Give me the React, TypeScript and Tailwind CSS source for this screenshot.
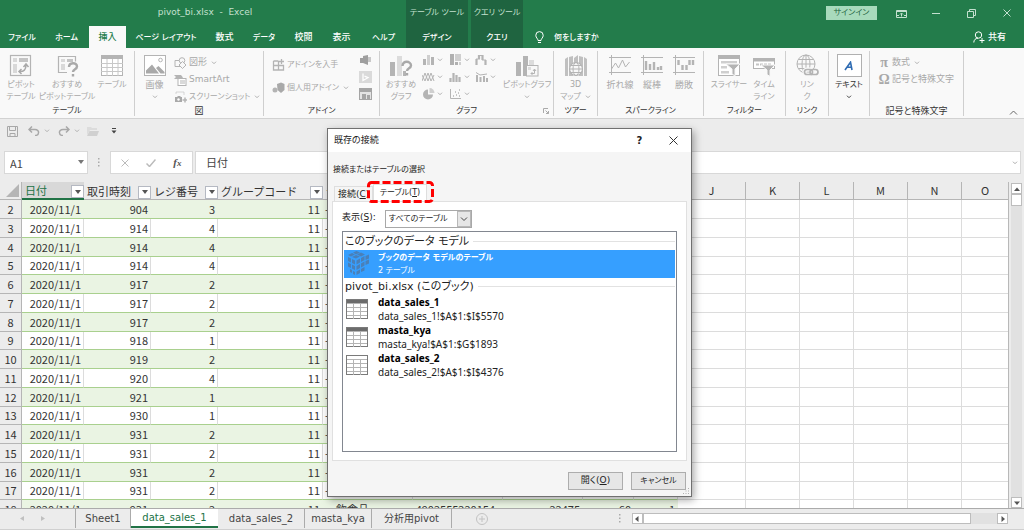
import type { ReactNode } from 'react';
import clsx from 'clsx';

type IconProps = { className?: string; children: ReactNode; box?: string };

function Icon({ className = 'h-[23px] w-[24px]', box = '0 0 24 23', children }: IconProps) {
  return (
    <svg className={clsx('shrink-0', className)} viewBox={box} fill="none" stroke="#b4b4b4">
      {children}
    </svg>
  );
}

function Small({ children }: { children: ReactNode }) {
  return (
    <Icon className="h-[12px] w-[13px]" box="0 0 13 12">
      {children}
    </Icon>
  );
}

function Chevron({ className = 'text-[#b0b0b0]' }: { className?: string }) {
  return (
    <svg className={clsx('h-[4px] w-[6px] shrink-0', className)} viewBox="0 0 6 4" fill="none" stroke="currentColor">
      <path d="M1 .7 3 2.7 5 .7" />
    </svg>
  );
}

/* ---------- ribbon drawings ---------- */

const pivotIcon = (
  <Icon>
    <rect x="1.5" y="1.5" width="20" height="20" strokeWidth="1.2" />
    <path d="M4 4h4v4H4zM4 10h4v9H4z" fill="#d9d9d9" stroke="none" />
    <path d="M10 4h9v4h-9z" fill="#c4c4c4" stroke="none" />
    <path d="M10 17.500c5 .5 7-2 7-6.500M14.500 13l2.500-3 2.500 3M12.500 15 10 17.500l2.500 2.500" stroke="#a9a9a9" strokeWidth="1.500" />
  </Icon>
);

const pivotHelpIcon = (
  <Icon>
    <path d="M12 18.500H3.500v-16h17v5" strokeWidth="1.200" />
    <path d="M6 5h4v3H6zM6 10h4v6H6z" fill="#d9d9d9" stroke="none" />
    <path d="M12 5h6v3h-6z" fill="#c4c4c4" stroke="none" />
    <path d="M14 13c0-5 8-5 8-.5 0 3-4 2.500-4 5.500M18 20v2.500" stroke="#a9a9a9" strokeWidth="2.400" />
  </Icon>
);

const tableIcon = (
  <Icon>
    <rect x="1.500" y="1.500" width="21" height="20" fill="#fff" />
    <path d="M1 1h22v4H1z" fill="#b4b4b4" stroke="none" />
    <path d="M1 9.500h22M1 13.500h22M1 17.500h22M7 5v17M12.500 5v17M18 5v17" stroke="#c8c8c8" />
  </Icon>
);

const pictureIcon = (
  <Icon>
    <rect x="1.500" y="1.500" width="21" height="20" fill="#fff" />
    <path d="M3 19.500v-3l6-6 7 9zM13 14l2.500-2 6 6v1.500h-4z" fill="#a9a9a9" stroke="none" />
    <circle cx="17.500" cy="6" r="1.800" />
  </Icon>
);

const chartHelpIcon = (
  <Icon>
    <path d="M1 8h5v14H1z" fill="#b4b4b4" stroke="none" />
    <path d="M8 2h5v20H8z" fill="#dcdcdc" stroke="none" />
    <path d="M14 17h3v5h-3z" fill="#b4b4b4" stroke="none" />
    <path d="M13.500 12c0-6 8.500-5 8.500-.5 0 3-4 2.500-4 5.500M18 19v2.500" stroke="#a9a9a9" strokeWidth="2.400" />
  </Icon>
);

const pivotChartIcon = (
  <Icon>
    <path d="M1 8h5v14H1z" fill="#b4b4b4" stroke="none" />
    <path d="M8 2h5v20H8z" fill="#b4b4b4" stroke="none" />
    <path d="M14 6h5v6h-5z" fill="#dcdcdc" stroke="none" />
    <rect x="11.500" y="11.500" width="11.500" height="10.500" fill="#f8f8f8" />
    <path d="M13 13h3v3h-3z" fill="#dcdcdc" stroke="none" />
    <path d="M16 19.500h3.500v-4M18 17l1.500-2 1.500 2M17.500 18 16 19.500l1.500 1.500" />
  </Icon>
);

const mapIcon = (
  <Icon>
    <path d="M1 5l3-2v19H1zM5 3l4-1v20H5zM10 4l4-3v8h-4zM15 2l4 1v19h-4zM20 3l3 2v17h-3z" fill="#c0c0c0" stroke="none" />
    <circle cx="12" cy="15" r="6.500" fill="#f8f8f8" strokeWidth="1.200" />
    <ellipse cx="12" cy="15" rx="3" ry="6.500" />
    <path d="M5.500 15h13M7 11.500h10M7 18.500h10" />
  </Icon>
);

const lineSpark = (
  <Icon>
    <path d="M1 3.500h22M1 18.500h22M3.500 1v20M3.500 15l4-6 3 5 4-8 3 7 4-5" />
  </Icon>
);

const columnSpark = (
  <Icon>
    <path d="M1 3.500h22M1 18.500h22M3.500 1v20" />
    <path d="M6 7v9M10 10v6M14 8v8M18 13v3M21 12v4" strokeWidth="2.400" />
  </Icon>
);

const winLossSpark = (
  <Icon>
    <path d="M1 3.500h22M1 18.500h22M3.500 1v20" />
    <path d="M6.500 6v5M10.500 11v5M14.500 11v5M17.500 6v5M21 6v5" strokeWidth="2.400" />
  </Icon>
);

const slicerIcon = (
  <Icon>
    <rect x="1.500" y="1.500" width="21" height="20" fill="#fff" />
    <path d="M1 1h22v4H1z" fill="#b4b4b4" stroke="none" />
    <path d="M4 7h16v2.500H4zM4 12h6v2.500H4zM4 17h8v2.500H4z" fill="#cfcfcf" stroke="none" />
    <path d="M9 10h14l-5 5v7l-3-2v-5z" fill="#b4b4b4" stroke="#f8f8f8" />
  </Icon>
);

const timelineIcon = (
  <Icon>
    <rect x="1.500" y="4.500" width="21" height="10" fill="#fff" />
    <path d="M1 4h22v3.500H1z" fill="#b4b4b4" stroke="none" />
    <path d="M4 10.500h16" stroke="#c4c4c4" strokeWidth="2" strokeDasharray="3 1" />
    <path d="M9 11h14l-5 5v6.500l-3-2V16z" fill="#b4b4b4" stroke="#f8f8f8" />
  </Icon>
);

const linkIcon = (
  <Icon>
    <circle cx="11" cy="10" r="9" />
    <ellipse cx="11" cy="10" rx="4" ry="9" />
    <path d="M2 10h18M3.500 5.500h15M3.500 14.500h11M11 1v18" />
    <rect x="9.500" y="15.500" width="8" height="5" rx="2.500" stroke="#f8f8f8" strokeWidth="4" />
    <rect x="9.500" y="15.500" width="8" height="5" rx="2.500" strokeWidth="1.700" />
    <rect x="15" y="15.500" width="8" height="5" rx="2.500" strokeWidth="1.700" />
  </Icon>
);

const textIcon = (
  <span className="flex h-[23px] w-[25px] shrink-0 items-center justify-center border border-[#b0b0b0] bg-white">
    <svg className="h-[10px] w-[10px]" viewBox="0 0 10 10" fill="none" stroke="#2f6cb3" strokeWidth="1.600">
      <path d="M1 9 6.500 1.200 8 9M3 6.300h4.500" />
    </svg>
  </span>
);

const shapesIcon = (
  <Small>
    <path d="M1 3.500h7v6H1z" />
    <circle cx="8" cy="3.500" r="2.800" fill="#f8f8f8" />
    <path d="M8.500 4.500 12 8l-3.500 3.500L5 8z" fill="#f8f8f8" />
  </Small>
);

const smartArtIcon = (
  <Small>
    <path d="M0 1h7l2 2.500L7 5H0l2-2z" fill="#b4b4b4" stroke="none" />
    <rect x="4" y="4.500" width="8" height="7" fill="#fff" />
    <path d="M6 7h5M6 9h5" />
  </Small>
);

const screenshotIcon = (
  <Small>
    <path d="M1 6h2l1-1h2l1 1h1v5H1z" fill="#a9a9a9" stroke="none" />
    <circle cx="4.500" cy="8.500" r="1.200" fill="#fff" stroke="none" />
    <path d="M11 6.500v5M8.500 9h5" strokeWidth="1.500" />
    <path d="M2 2.500V1h8v3" strokeDasharray="1 1" />
  </Small>
);

const getAddinIcon = (
  <Small>
    <path d="M1.500 2v9h10V6.500h-10M6.500 2v9M1.500 2h5M9.500 0v5M7 2.500h5" strokeWidth="1.300" />
  </Small>
);

const myAddinIcon = (
  <Small>
    <path d="M5 2 9 .5 12.500 2v6L9 11 5.500 8z" fill="#a9a9a9" stroke="none" />
    <circle cx="3" cy="8" r="2.500" fill="#b4b4b4" stroke="none" />
  </Small>
);

const addinShortcuts = [
  <Small key="visio">
    <path d="M1 4h5v5H1zM4 2l5-1v10L4 9z" fill="#9f9f9f" stroke="none" />
    <path d="M9 3h3v5H9z" fill="#c9c9c9" stroke="none" />
  </Small>,
  <Small key="bing">
    <path d="M0 0h13v12H0z" fill="#dadada" stroke="none" />
    <path d="M4 2.500v7l5-2.800-3.500-1.500" stroke="#fff" strokeWidth="1.300" />
  </Small>,
  <Small key="people">
    <rect x=".5" y=".5" width="12" height="11" fill="#e3e3e3" stroke="#a5a5a5" />
    <path d="M1 1h11v3H1zM3 6h4v5H3zM8 7h3v4H8z" fill="#a5a5a5" stroke="none" />
  </Small>,
];

const chartIcons: ReactNode[] = [
  <Small key="column">
    <path d="M1 5h3v6H1zM9 3h3v8H9z" fill="#b4b4b4" stroke="none" />
    <path d="M5 1h3v10H5z" fill="#cfcfcf" stroke="none" />
  </Small>,
  <Small key="tree">
    <path d="M1 0h4v11H1zM6 8h3v3H6z" fill="#b0b0b0" stroke="none" />
    <path d="M6 0h6v7H6zM10 8h2v3h-2z" fill="#cfcfcf" stroke="none" />
  </Small>,
  <Small key="waterfall">
    <path d="M1.500 5v6M4 1v4M7.500 1v5M10.500 6v5" strokeWidth="2.200" />
    <path d="M1 5h4M4 1.500h4M7 6h4" />
  </Small>,
  <Small key="line">
    <path d="M0 10 3 2l3 8 3-8 3 8M0 4l3 6 3-8 3 8 3-6" />
  </Small>,
  <Small key="histogram">
    <path d="M1.500 7v4M4.500 2v9M7.500 4v7M10.500 6v5" strokeWidth="2.200" />
  </Small>,
  <Small key="combo">
    <path d="M2 4v7M5.500 6v5M9 5v6M12 7v4" strokeWidth="2" />
    <path d="M1 1.500 5 4l7-1" />
  </Small>,
  <Small key="pie">
    <path d="M6 1.500a5 5 0 1 0 5 5H6z" fill="#b4b4b4" stroke="none" />
    <path d="M7.500 0a5 5 0 0 1 5 5h-5z" fill="#cfcfcf" stroke="none" />
  </Small>,
  <Small key="scatter">
    <path d="M1.500 1v9.500H12" />
    <path d="M4 8h1M6 4h1M7 7h1M9 5h1M10 2h1M10 8h1" strokeWidth="1.500" />
  </Small>,
];

/* ---------- ribbon ---------- */

type GroupProps = { label: string; width: string; children: ReactNode; corner?: boolean; wide?: boolean };

function Group({ label, width, children, corner, wide }: GroupProps) {
  return (
    <section className={clsx('flex h-[65px] shrink-0 flex-col border-r border-[#cfcfcf]', width)}>
      <div className="flex h-[53px] shrink-0 pt-[3px]">{children}</div>
      <div className={clsx('relative text-center leading-[14px] text-[#333]', wide ? 'text-[9px]' : 'text-[8px]')}>
        {label}
        {corner && (
          <svg className="absolute right-1 bottom-1 h-[6px] w-[6px]" viewBox="0 0 6 6" fill="none" stroke="#aaa">
            <path d="M.5 5V.5H5M2.500 2.500l3 3M5.500 3v2.500H3" />
          </svg>
        )}
      </div>
    </section>
  );
}

type BigProps = {
  icon: ReactNode;
  lines: string[];
  width: string;
  arrow?: boolean;
  inlineArrow?: boolean;
  dark?: boolean;
  wide?: boolean;
};

function Big({ icon, lines, width, arrow, inlineArrow, dark, wide }: BigProps) {
  return (
    <button
      className={clsx(
        'flex shrink-0 flex-col items-center leading-[12px] whitespace-nowrap',
        width,
        wide ? 'text-[9px]' : 'text-[8px]',
        dark ? 'text-[#333]' : 'text-[#a8a8a8]',
      )}
    >
      {icon}
      <span className="h-[2px]" />
      {lines.map((line, i) => (
        <span key={line} className="flex items-center gap-1">
          {line}
          {inlineArrow && i === lines.length - 1 && <Chevron />}
        </span>
      ))}
      {arrow && <Chevron className={clsx('mt-1', dark ? 'text-[#444]' : 'text-[#b0b0b0]')} />}
    </button>
  );
}

function Row({ icon, label, arrow, wide }: { icon: ReactNode; label: string; arrow?: boolean; wide?: boolean }) {
  return (
    <button
      className={clsx(
        'flex h-[17px] items-center gap-[2px] whitespace-nowrap text-[#a8a8a8]',
        wide ? 'text-[9px]' : 'text-[8px]',
      )}
    >
      {icon}
      {label}
      {arrow && (
        <span className="pl-[2px]">
          <Chevron />
        </span>
      )}
    </button>
  );
}

function Ribbon() {
  return (
    <div className="relative flex h-[71px] overflow-hidden border-b border-[#d2d2d2] bg-[#f9f9f9] pt-[3px]">
      <Group label="テーブル" width="w-[135px]">
        <Big icon={pivotIcon} lines={['ピボット', 'テーブル']} width="w-[42px]" />
        <Big icon={pivotHelpIcon} lines={['おすすめ', 'ピボットテーブル']} width="w-[50px]" />
        <Big icon={tableIcon} lines={['テーブル']} width="w-[40px]" />
      </Group>
      <Group label="図" width="w-[129px]" wide>
        <Big icon={pictureIcon} lines={['画像']} width="w-[39px]" arrow wide />
        <div>
          <Row icon={shapesIcon} label="図形" arrow wide />
          <Row icon={smartArtIcon} label="SmartArt" wide />
          <Row icon={screenshotIcon} label="スクリーンショット" arrow />
        </div>
      </Group>
      <Group label="アドイン" width="w-[116px]">
        <div className="flex w-[95px] flex-col gap-[6px] pt-[2px] pl-2">
          <Row icon={getAddinIcon} label="アドインを入手" />
          <Row icon={myAddinIcon} label="個人用アドイン" arrow />
        </div>
        <div className="flex flex-col gap-[5px]">{addinShortcuts}</div>
      </Group>
      <Group label="グラフ" width="w-[174px]" corner>
        <Big icon={chartHelpIcon} lines={['おすすめ', 'グラフ']} width="w-[42px]" />
        <div className="grid h-[50px] w-[80px] grid-cols-3 content-start gap-y-[5px]">
          {chartIcons.map((icon, i) => (
            <button key={i} className="flex items-center gap-[2px]">
              {icon}
              <Chevron />
            </button>
          ))}
        </div>
        <Big icon={pivotChartIcon} lines={['ピボットグラフ']} width="w-[50px]" arrow />
      </Group>
      <Group label="ツアー" width="w-[44px]">
        <Big icon={mapIcon} lines={['3D', 'マップ']} width="w-[43px]" inlineArrow />
      </Group>
      <Group label="スパークライン" width="w-[106px]">
        <span className="w-[6px]" />
        <Big icon={lineSpark} lines={['折れ線']} width="w-[32px]" wide />
        <Big icon={columnSpark} lines={['縦棒']} width="w-[32px]" wide />
        <Big icon={winLossSpark} lines={['勝敗']} width="w-[32px]" wide />
      </Group>
      <Group label="フィルター" width="w-[82px]">
        <span className="w-[6px]" />
        <Big icon={slicerIcon} lines={['スライサー']} width="w-[38px]" />
        <Big icon={timelineIcon} lines={['タイム', 'ライン']} width="w-[32px]" />
      </Group>
      <Group label="リンク" width="w-[43px]">
        <Big icon={linkIcon} lines={['リン', 'ク']} width="w-[42px]" />
      </Group>
      <Group label="" width="w-[41px]">
        <Big icon={textIcon} lines={['テキスト']} width="w-[40px]" arrow dark />
      </Group>
      <Group label="記号と特殊文字" width="w-[94px]" wide>
        <div className="pl-2">
          <Row icon={<span className="w-[12px] font-['Liberation_Serif'] text-[14px] font-bold">π</span>} label="数式" arrow wide />
          <Row icon={<span className="w-[12px] font-['Liberation_Serif'] text-[14px] font-bold">Ω</span>} label="記号と特殊文字" wide />
        </div>
      </Group>
      <button aria-label="リボンを折りたたむ" className="ml-auto self-end px-[6px] py-[3px]">
        <svg className="h-[5px] w-[9px]" viewBox="0 0 9 5" fill="none" stroke="#666">
          <path d="M1 4.500 4.500 1 8 4.500" />
        </svg>
      </button>
    </div>
  );
}

/* ---------- title bar and tabs ---------- */

const menu = [
  { label: 'ファイル', className: 'w-[44px] text-[8px]' },
  { label: 'ホーム', className: 'w-[45px] text-[8px]' },
  { label: '挿入', className: 'w-[37px] text-[9px] bg-[#f9f9f9] text-[#237c4b]' },
  { label: 'ページ レイアウト', className: 'w-[80px] text-[8px]' },
  { label: '数式', className: 'w-[37px] text-[9px]' },
  { label: 'データ', className: 'w-[42px] text-[8px]' },
  { label: '校閲', className: 'w-[37px] text-[9px]' },
  { label: '表示', className: 'w-[39px] text-[9px]' },
  { label: 'ヘルプ', className: 'w-[45px] text-[8px]' },
];

function Header() {
  return (
    <header className="bg-[#237c4b] text-white">
      <div className="flex h-[26px] items-center text-[8px] whitespace-nowrap text-[#c3e0cf]">
        <div className="w-[406px] pl-1 text-center text-[9px]">pivot_bi.xlsx&nbsp; -&nbsp; Excel</div>
        <div className="w-[62px] self-stretch bg-[#1f6440] text-center leading-[25px]">テーブル ツール</div>
        <div className="ml-[3px] w-[52px] self-stretch bg-[#1f6440] text-center leading-[25px]">クエリ ツール</div>
        <div className="ml-auto flex items-center">
          <button className="mr-[7px] h-[14px] w-[51px] bg-[#a8dabc] leading-[14px] text-[#1f6440]">サインイン</button>
          <button aria-label="リボンの表示オプション" className="flex w-[35px] justify-center">
            <svg className="h-[9px] w-[11px]" viewBox="0 0 11 9" fill="none" stroke="#c3e0cf">
              <path d="M.5 1.500h10v7H.5zM.5 2.500h10M5.500 7.500V4.500M4 5.500 5.500 4 7 5.500M1 6.500h2M8 6.500h2" />
            </svg>
          </button>
          <button aria-label="最小化" className="flex w-[35px] justify-center">
            <svg className="h-[9px] w-[9px]" viewBox="0 0 9 9" stroke="#c3e0cf">
              <path d="M0 4.500h8" />
            </svg>
          </button>
          <button aria-label="元に戻す" className="flex w-[35px] justify-center">
            <svg className="h-[9px] w-[9px]" viewBox="0 0 9 9" fill="none" stroke="#c3e0cf">
              <path d="M.5 2.500h6v6h-6zM2.500 2V.5h6v6H7" />
            </svg>
          </button>
          <button aria-label="閉じる" className="flex w-[35px] justify-center">
            <svg className="h-[8px] w-[8px]" viewBox="0 0 8 8" stroke="#c3e0cf">
              <path d="M.5.5l7 7M7.500.5l-7 7" />
            </svg>
          </button>
        </div>
      </div>
      <nav className="flex h-[22px] text-[8px] leading-[21px] font-medium whitespace-nowrap">
        {menu.map((item) => (
          <button key={item.label} className={clsx('text-center', item.className)}>
            {item.label}
          </button>
        ))}
        <button className="w-[62px] bg-[#1f6440]">デザイン</button>
        <button className="ml-[3px] w-[52px] bg-[#1f6440]">クエリ</button>
        <button className="ml-[12px] flex items-center gap-[10px]">
          <svg className="h-[13px] w-[9px]" viewBox="0 0 9 13" fill="none" stroke="#fff">
            <path d="M3 9.500C3 7.500.8 7 .8 4.300a3.700 3.700 0 0 1 7.400 0C8.200 7 6 7.500 6 9.500zM3 11.500h3" />
          </svg>
          何をしますか
        </button>
        <button className="mr-[18px] ml-auto flex items-center gap-[3px] text-[9px]">
          <svg className="h-[12px] w-[12px]" viewBox="0 0 12 12" fill="none" stroke="#fff">
            <circle cx="5.500" cy="4" r="3.200" />
            <path d="M.8 11.500c0-2.500 1.700-4.300 4.200-4.300M9 7v5M6.500 9.500h5" />
          </svg>
          共有
        </button>
      </nav>
    </header>
  );
}

function QuickAccess() {
  return (
    <div className="flex h-[32px] items-center pb-[8px] pl-[7px] text-[#aaa]">
      <button aria-label="保存">
        <svg className="h-[11px] w-[11px]" viewBox="0 0 11 11" fill="none" stroke="#a8a8a8">
          <path d="M.5.5h10v10H.5zM2.500.5v4h6v-4M3 10.500V7.500h5v3" />
        </svg>
      </button>
      <button aria-label="元に戻す" className="ml-[10px] flex items-center gap-1">
        <svg className="h-[10px] w-[12px]" viewBox="0 0 12 10" fill="none" stroke="#a8a8a8" strokeWidth="1.500">
          <path d="M4 .5 1 3.500l3 3M1 3.500h6c5 0 4.500 6 0 6" />
        </svg>
        <Chevron />
      </button>
      <button aria-label="やり直し" className="ml-[8px] flex items-center gap-1">
        <svg className="h-[10px] w-[12px]" viewBox="0 0 12 10" fill="none" stroke="#a8a8a8" strokeWidth="1.500">
          <path d="M8 .5l3 3-3 3M11 3.500H5c-5 0-4.500 6 0 6" />
        </svg>
        <Chevron />
      </button>
      <button aria-label="開く" className="ml-[6px]">
        <svg className="h-[10px] w-[13px]" viewBox="0 0 13 10" fill="#dcdcdc">
          <path d="M1 9V1h4l1 1h5v2H4z" />
          <path d="M3.500 5H13l-2 5H1z" fill="#d0d0d0" />
        </svg>
      </button>
      <button aria-label="カスタマイズ" className="ml-[12px]">
        <svg className="h-[6px] w-[6px]" viewBox="0 0 6 6" fill="#444">
          <path d="M1 0h4v1H1zM.5 2.500h5L3 5.500z" />
        </svg>
      </button>
    </div>
  );
}

function FormulaBar() {
  return (
    <div className="flex h-[31px] items-start pr-[3px] pl-1 font-['Noto_Sans_CJK_JP',sans-serif] text-[11px] text-[#444]">
      <div className="relative">
        <input aria-label="名前ボックス" defaultValue="A1" className="h-[23px] w-[84px] border border-[#d8d8d8] bg-white pl-[5px] outline-none" />
        <svg className="absolute top-[9px] right-1 h-[4px] w-[6px]" viewBox="0 0 6 4" fill="#777">
          <path d="M0 0h6L3 4z" />
        </svg>
      </div>
      <svg className="mx-[10px] mt-[7px] h-[9px] w-[2px]" viewBox="0 0 2 9" fill="#aaa">
        <path d="M0 0h1.500v1.500H0zM0 3.500h1.500V5H0zM0 7h1.500v1.500H0z" />
      </svg>
      <div className="flex h-[23px] w-[83px] items-center justify-around border border-[#d8d8d8] bg-white px-[2px]">
        <button aria-label="キャンセル">
          <svg className="h-[8px] w-[8px]" viewBox="0 0 8 8" stroke="#bbb">
            <path d="M.5.5l7 7M7.500.5l-7 7" />
          </svg>
        </button>
        <button aria-label="入力">
          <svg className="h-[8px] w-[10px]" viewBox="0 0 10 8" fill="none" stroke="#bbb" strokeWidth="1.500">
            <path d="M.5 4.500 3.500 7.500 9.500.5" />
          </svg>
        </button>
        <button aria-label="関数の挿入" className="font-['Liberation_Serif'] text-[11px] font-bold text-[#555] italic">
          f<span className="text-[9px]">x</span>
        </button>
      </div>
      <div className="relative ml-[2px] flex-1">
        <input aria-label="数式バー" defaultValue="日付" className="h-[23px] w-full border border-[#d8d8d8] bg-white pb-[2px] pl-[10px] outline-none" />
        <Chevron className="absolute top-[10px] right-[3px] text-[#aaa]" />
      </div>
    </div>
  );
}

/* ---------- sheet ---------- */

const rows: [number, number][] = [
  [904, 3],
  [914, 4],
  [914, 4],
  [914, 4],
  [917, 2],
  [917, 2],
  [917, 2],
  [918, 1],
  [919, 2],
  [920, 4],
  [921, 1],
  [930, 1],
  [931, 2],
  [931, 2],
  [931, 2],
  [931, 2],
  [931, 2],
];

const headers = ['日付', '取引時刻', 'レジ番号', 'グループコード'];
const letters = ['J', 'K', 'L', 'M', 'N', 'O'];

function FilterButton() {
  return (
    <button aria-label="フィルター" className="flex h-[13px] w-[13px] shrink-0 items-center justify-center border border-[#b5b9c2] bg-white">
      <svg className="h-[4px] w-[6px]" viewBox="0 0 6 4" fill="#555">
        <path d="M0 0h6L3 4z" />
      </svg>
    </button>
  );
}

function Sheet() {
  return (
    <div className="min-w-0 flex-1 overflow-hidden border-r border-[#b8b8b8] bg-white">
      <table className="w-full table-fixed border-separate border-spacing-0 font-['Noto_Sans_CJK_JP',sans-serif] text-[11px] leading-[15px] text-[#333] [font-feature-settings:normal]">
        <colgroup>
          <col className="w-[22px]" />
          <col className="w-[62px]" />
          <col className="w-[67px]" />
          <col className="w-[67px]" />
          <col className="w-[105px]" />
          <col className="w-[90px]" />
          <col className="w-[90px]" />
          <col className="w-[80px]" />
          <col className="w-[51px]" />
          <col className="w-[44px]" />
          <col className="w-[68px]" />
          <col className="w-[54px]" />
          <col className="w-[54px]" />
          <col className="w-[54px]" />
          <col className="w-[54px]" />
          <col />
        </colgroup>
        <thead className="bg-[#ececec]">
          <tr className="h-[18px]">
            <th className="border-r border-b border-[#b5b5b5] p-0">
              <svg className="ml-[6px] h-[13px] w-[13px]" viewBox="0 0 13 13" fill="#b5b5b5">
                <path d="M13 0v13H0z" />
              </svg>
            </th>
            {headers.map((name, i) => (
              <th
                key={name}
                className={clsx(
                  'p-0 font-normal whitespace-nowrap',
                  i === 0 ? 'border-b-2 border-[#217346] bg-[#d8d8d8] text-[#217346]' : 'border-b border-[#b5b5b5]',
                )}
              >
                <div className="flex h-[16px] items-end justify-between pl-[3px]">
                  <span>{name}</span>
                  <FilterButton />
                </div>
              </th>
            ))}
            <th colSpan={5} className="border-b border-[#b5b5b5] p-0 pl-[3px] text-left font-normal">
              グ
            </th>
            {letters.map((letter) => (
              <th key={letter} className="border-r border-b border-[#b5b5b5] p-0 font-normal last:border-r-0">
                {letter}
              </th>
            ))}
          </tr>
        </thead>
        <tbody>
          {rows.map(([time, register], i) => {
            const cell = clsx(
              'overflow-hidden border-b p-0 whitespace-nowrap border-b-[#a9d08e]',
              i % 2 === 0 ? 'bg-[#eaf4e3]' : 'border-r border-r-[#dcdcdc]',
            );
            const number = clsx(cell, 'text-right', i % 2 === 0 ? 'pr-[3px]' : 'pr-[2px]');
            const last = i === rows.length - 1;
            return (
              <tr key={i} className={i % 4 === 3 ? 'h-[18px]' : 'h-[19px]'}>
                <th className="border-r border-b border-[#b5b5b5] bg-[#ececec] p-0 font-normal">{i + 2}</th>
                <td className={number}>2020/11/1</td>
                <td className={number}>{time}</td>
                <td className={number}>{register}</td>
                <td className={number}>11</td>
                <td className={clsx(cell, last ? 'pl-[13px]' : 'pl-[2px]')}>{last ? '飲食品' : '-'}</td>
                <td className={clsx(cell, 'pr-[8px] text-right')}>{last && '4902555220154'}</td>
                <td className={number}>{last && '22475'}</td>
                <td className={number}>{last && '60'}</td>
                <td className={number}>{last && '1'}</td>
                {letters.map((letter) => (
                  <td key={letter} className="border-r border-b border-[#dcdcdc] p-0 last:border-r-0" />
                ))}
              </tr>
            );
          })}
        </tbody>
      </table>
    </div>
  );
}

function Arrow({ d, label }: { d: string; label: string }) {
  return (
    <button aria-label={label} className="flex h-[11px] w-[11px] shrink-0 items-center justify-center border border-[#bdbdbd] bg-white">
      <svg className="h-[6px] w-[6px]" viewBox="0 0 6 6" fill="#555">
        <path d={d} />
      </svg>
    </button>
  );
}

function VerticalScroll() {
  return (
    <div className="mt-[1px] mr-[2px] ml-[2px] flex w-[11px] flex-col bg-[#e1e1e1]">
      <Arrow label="上へ" d="M0 5h6L3 1.500z" />
      <div className="h-[12px] border border-[#bdbdbd] bg-white" />
      <div className="flex-1" />
      <Arrow label="下へ" d="M0 1.500h6L3 5z" />
    </div>
  );
}

const sheetTabs = [
  { name: 'Sheet1', width: 'w-[56px]' },
  { name: 'data_sales_1', width: 'w-[87px]', active: true },
  { name: 'data_sales_2', width: 'w-[87px]' },
  { name: 'masta_kya', width: 'w-[67px]' },
  { name: '分析用pivot', width: 'w-[80px]' },
];

function SheetBar() {
  return (
    <footer className="flex h-[22px] border-t border-b border-t-[#ababab] border-b-[#d0d0d0] bg-[#ececec] pb-[1px] text-[10px] text-[#444]">
      <div className="flex w-[75px] items-center gap-[17px] pl-[20px]">
        <button aria-label="前のシート" className="flex">
          <svg className="h-[5px] w-[4px]" viewBox="0 0 4 5" fill="#c0c0c0">
            <path d="M4 0v5L0 2.500z" />
          </svg>
        </button>
        <button aria-label="次のシート" className="flex">
          <svg className="h-[5px] w-[4px]" viewBox="0 0 4 5" fill="#c0c0c0">
            <path d="M0 0v5l4-2.500z" />
          </svg>
        </button>
      </div>
      {sheetTabs.map((tab, i) => (
        <button
          key={tab.name}
          className={clsx(
            'h-[19px] leading-[17px] whitespace-nowrap',
            tab.width,
            tab.active ? 'border-b-2 border-[#217346] bg-white text-[#217346]' : 'border-r border-[#ababab]',
            i === 0 && 'border-l',
          )}
        >
          {tab.name}
        </button>
      ))}
      <button aria-label="新しいシート" className="ml-[24px] self-center">
        <svg className="h-[12px] w-[12px]" viewBox="0 0 12 12" fill="none" stroke="#c2c2c2">
          <circle cx="6" cy="6" r="5.500" />
          <path d="M6 3v6M3 6h6" />
        </svg>
      </button>
      <div className="mr-[16px] ml-auto flex w-[38%] items-center gap-[11px]">
        <svg className="h-[9px] w-[2px] shrink-0" viewBox="0 0 2 9" fill="#aaa">
          <path d="M0 0h1.500v1.500H0zM0 3.500h1.500V5H0zM0 7h1.500v1.500H0z" />
        </svg>
        <div className="flex h-[11px] flex-1 bg-[#e1e1e1]">
          <Arrow label="左へ" d="M4.500 0v6L1 3z" />
          <div className="mr-[26px] flex-1 border border-[#bdbdbd] bg-white" />
          <Arrow label="右へ" d="M1.500 0v6L5 3z" />
        </div>
      </div>
    </footer>
  );
}

/* ---------- dialog ---------- */

const tables = [
  { name: 'data_sales_1', range: 'data_sales_1!$A$1:$I$5570', filled: true },
  { name: 'masta_kya', range: 'masta_kya!$A$1:$G$1893', filled: true },
  { name: 'data_sales_2', range: 'data_sales_2!$A$1:$I$4376', filled: false },
];

function Heading({ children }: { children: ReactNode }) {
  return (
    <div className="flex h-[17px] items-center gap-1 pl-[1px] text-[11px] leading-[17px] whitespace-nowrap">
      {children}
      <span className="h-px flex-1 bg-[#e2e2e2]" />
    </div>
  );
}

function CubeIcon() {
  return (
    <svg className="h-[24px] w-[23px] shrink-0" viewBox="0 0 23 24" fill="#4a80b8">
      <path d="M1 4l4-2 3 1.500-4 2zM6 1.500 9.500 0l3.500 1.500-4 2zM5 6l4-2 4 1.500-4 2zM10 3.500l4-2 4 2-4 2zM1 6l3 1.500v4L1 10zM5 8l3 1.500v4L5 12zM9.500 9.500l3.500-2v4l-3.500 2zM14 7l3.500-2v4L14 11zM18.500 5 22 3.500v4L18.500 9zM1 11.500 4 13v4l-3-1.500zM5 13.500 8 15v4l-3-1.500zM9.500 15l3.500-2v4l-3.500 2zM14 12.500l3.500-2v4L14 16.500zM18.500 10 22 8.500v4L18.500 14zM3 18l2 1v3l-2-1zM6 20l2 1v3l-2-1zM9.500 20.500l3.500-2v3.500l-3.500 2zM14 18l3.500-2v3.500L14 21z" />
    </svg>
  );
}

function TableListIcon({ filled }: { filled: boolean }) {
  return (
    <svg className="h-[20px] w-[22px] shrink-0" viewBox="0 0 22 20" fill="none" stroke="#7a7a7a">
      <rect x=".5" y=".5" width="21" height="19" fill="#fff" />
      <path d="M1 1h20v3H1z" fill={filled ? '#6c6c6c' : '#fff'} stroke="none" />
      <path d="M1 4.500h20M1 8.500h20M1 12.500h20M1 16.500h20M7.500 4v16M14.500 4v16" stroke="#b4b4b4" />
    </svg>
  );
}

function Dialog() {
  return (
    <div
      role="dialog"
      aria-label="既存の接続"
      className="absolute top-[128px] left-[327px] flex h-[369px] w-[365px] flex-col border border-[#707070] bg-[#f5f5f5] text-[8px] text-[#222] shadow-[2px_3px_8px_rgba(0,0,0,0.35)]"
    >
      <div className="flex h-[23px] shrink-0 items-center bg-white pr-[13px] pl-[6px] text-[9px]">
        既存の接続
        <button className="ml-auto w-[9px] text-[10px] font-bold">?</button>
        <button aria-label="閉じる" className="ml-[25px]">
          <svg className="h-[9px] w-[9px]" viewBox="0 0 9 9" stroke="#333">
            <path d="M.5.5l8 8M8.500.5l-8 8" />
          </svg>
        </button>
      </div>
      <p className="mt-[10px] pl-[5px] leading-[16px]">接続またはテーブルの選択</p>
      <div className="relative mt-[5px] flex h-[18px] items-end pl-[6px]">
        <button className="h-[15px] w-[39px] border border-b-0 border-[#dedede] pl-[3px] text-left text-[9px] leading-[14px] whitespace-nowrap">
          接続(<u>C</u>)
        </button>
        <button className="h-[17px] w-[54px] border border-b-0 border-[#dedede] bg-white leading-[14px] whitespace-nowrap">
          テーブル(<u>T</u>)
        </button>
        <svg className="absolute -top-1 left-[38px] h-[24px] w-[69px]" viewBox="0 0 69 24" fill="none" stroke="#f00" strokeWidth="3">
          <rect x="2.500" y="3.500" width="64" height="19" rx="3" strokeDasharray="8 3" />
        </svg>
      </div>
      <div className="mx-[4px] flex h-[260px] flex-col border border-[#e0e0e0] bg-white px-[9px] pt-2 pb-[8px]">
        <div className="flex h-[21px] items-start gap-[9px]">
          <label htmlFor="show" className="text-[9px] leading-[14px]">
            表示(<u>S</u>):
          </label>
          <div className="relative">
            <select id="show" className="h-[18px] w-[87px] appearance-none border border-[#a8a8a8] bg-white pl-[3px] leading-[14px] outline-none">
              <option>すべてのテーブル</option>
            </select>
            <span className="pointer-events-none absolute top-px right-px flex h-[16px] w-[14px] items-center justify-center border border-[#b8b8b8] bg-[#e6e6e6]">
              <svg className="h-[5px] w-[8px]" viewBox="0 0 8 5" fill="none" stroke="#444">
                <path d="M1 .5l3 3 3-3" />
              </svg>
            </span>
          </div>
        </div>
        <div className="flex-1 border border-[#828790] p-px">
          <Heading>このブックのデータ モデル</Heading>
          <div className="flex h-[28px] gap-[8px] bg-[#369fff] pt-px pl-[3px] leading-[13px] text-[#fff]">
            <CubeIcon />
            <div>
              <div className="font-bold">ブックのデータ モデルのテーブル</div>
              <div>2 テーブル</div>
            </div>
          </div>
          <Heading>pivot_bi.xlsx (このブック)</Heading>
          {tables.map((table) => (
            <div key={table.name} className="flex h-[28px] items-center gap-[10px] pl-[2px] font-['Noto_Sans'] text-[10px] leading-[14px]">
              <TableListIcon filled={table.filled} />
              <div>
                <div className="font-bold text-black">{table.name}</div>
                <div>{table.range}</div>
              </div>
            </div>
          ))}
        </div>
      </div>
      <div className="flex justify-end gap-2 pt-[11px] pr-[5px]">
        <button className="h-[18px] w-[55px] border border-[#adadad] bg-[#e6e6e6] text-[9px]">
          開く(<u>O</u>)
        </button>
        <button className="h-[18px] w-[55px] border border-[#adadad] bg-[#e6e6e6]">キャンセル</button>
      </div>
      <svg className="absolute right-px bottom-px h-[7px] w-[7px]" viewBox="0 0 7 7" fill="#b0b0b0">
        <path d="M5 0h1v1H5zM5 2.500h1v1H5zM5 5h1v1H5zM2.500 2.500h1v1h-1zM2.500 5h1v1h-1zM0 5h1v1H0z" />
      </svg>
    </div>
  );
}

export default function App() {
  return (
    <div className="relative flex h-screen flex-col overflow-hidden bg-[#ececec] font-['DejaVu_Sans','Noto_Sans_CJK_JP',sans-serif] [font-feature-settings:'palt']">
      <Header />
      <Ribbon />
      <QuickAccess />
      <FormulaBar />
      <div className="flex min-h-0 flex-1">
        <Sheet />
        <VerticalScroll />
      </div>
      <SheetBar />
      <Dialog />
    </div>
  );
}
